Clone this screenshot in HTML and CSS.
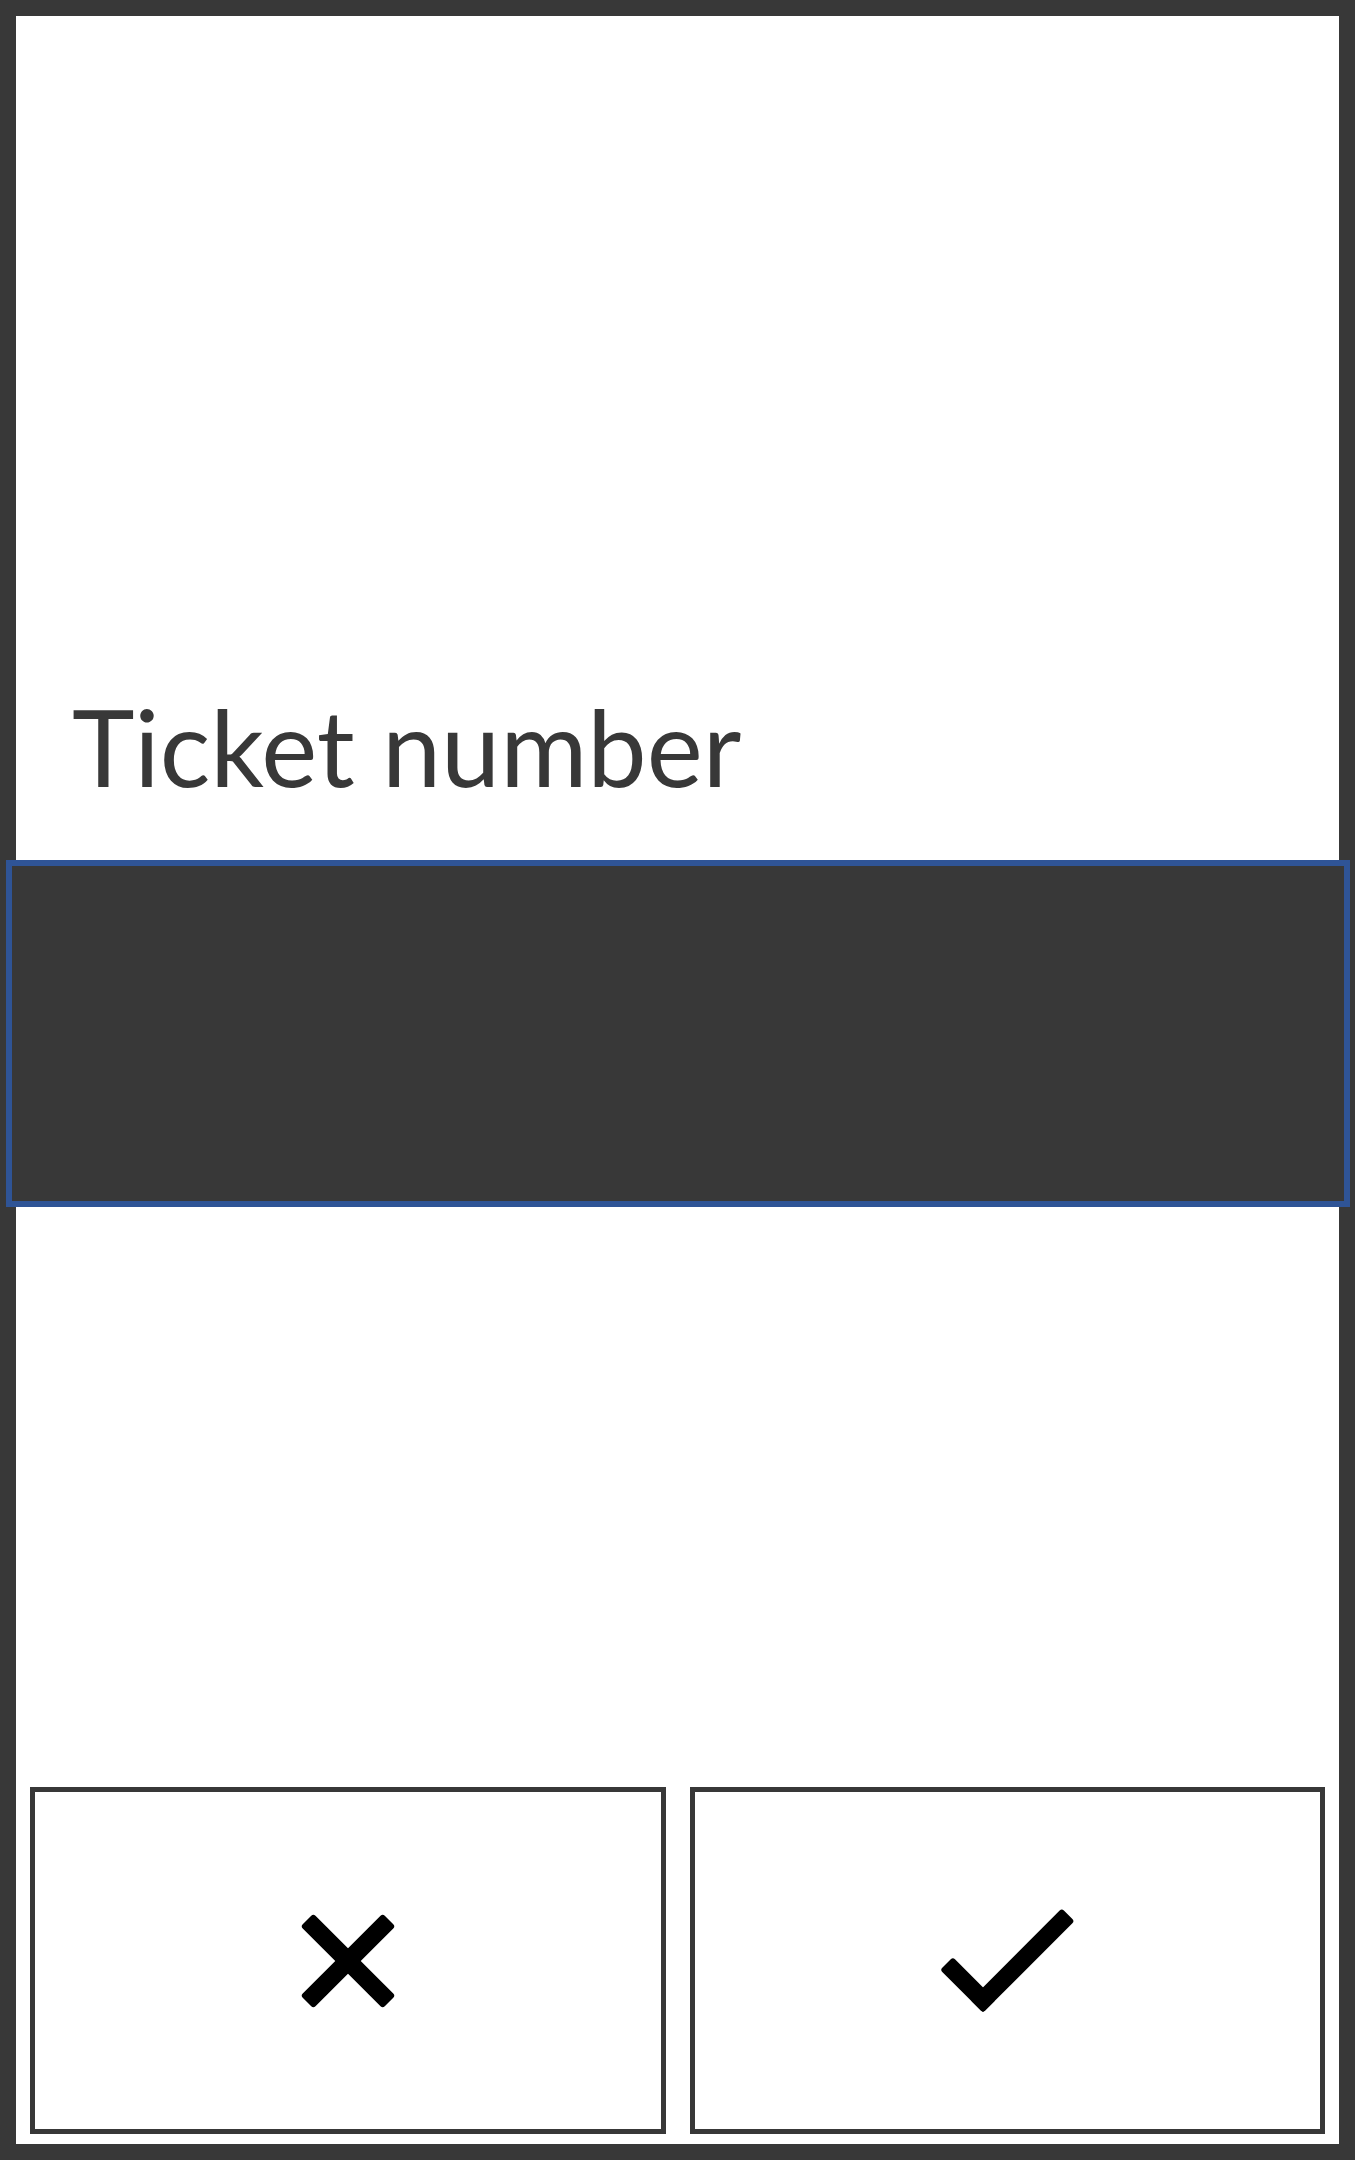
FILE: index.html
```html
<!DOCTYPE html>
<html lang="en">
<head>
<meta charset="utf-8">
<title>Ticket number</title>
<link rel="stylesheet" href="styles.css">
</head>
<body>
<div class="screen">
  <label class="label" for="ticket">Ticket number</label>
  <input class="field" id="ticket" type="text">
  <div class="actions">
    <button class="btn" type="button" aria-label="Cancel">
      <svg class="icon-x" width="96" height="96" viewBox="0 0 96 96">
        <g fill="#000">
          <rect x="-58" y="-9" width="116" height="18" rx="3" transform="translate(48 48) rotate(45)"/>
          <rect x="-58" y="-9" width="116" height="18" rx="3" transform="translate(48 48) rotate(-45)"/>
        </g>
      </svg>
    </button>
    <button class="btn" type="button" aria-label="Confirm">
      <svg class="icon-check" width="137" height="106" viewBox="0 0 137 106">
        <g fill="#000">
          <rect x="-9" y="-9" width="129.4" height="18" rx="3" transform="translate(44 92) rotate(-45)"/>
          <rect x="-9" y="-9" width="60.6" height="18" rx="3" transform="translate(44 92) rotate(-135)"/>
        </g>
      </svg>
    </button>
  </div>
</div>
</body>
</html>
```

FILE: styles.css
```css
html, body {
  margin: 0;
  padding: 0;
  background: #383838;
}

.screen {
  box-sizing: border-box;
  width: 1355px;
  height: 2160px;
  border: 16px solid #383838;
  background: #ffffff;
  display: flex;
  flex-direction: column;
  font-family: Lato, "Noto Sans", sans-serif;
  color: #383838;
}

.label {
  display: block;
  margin-top: 667px;
  padding-left: 56px;
  font-size: 106px;
  line-height: 127px;
  font-weight: 400;
  color: #383838;
}

.field {
  box-sizing: border-box;
  display: block;
  width: 1344px;
  height: 347px;
  margin: 50px 0 0 -10px;
  padding: 0;
  border: 6px solid #2f5496;
  background: #383838;
  outline: none;
  font: inherit;
  color: #ffffff;
}

.actions {
  margin-top: auto;
  display: flex;
  gap: 24px;
  padding: 0 14px 10px 14px;
}

.btn {
  box-sizing: border-box;
  flex: 1 1 0;
  height: 347px;
  margin: 0;
  padding: 0;
  border: 5px solid #383838;
  background: #ffffff;
  display: flex;
  align-items: center;
  justify-content: center;
  cursor: pointer;
}

.btn svg {
  display: block;
}
```
